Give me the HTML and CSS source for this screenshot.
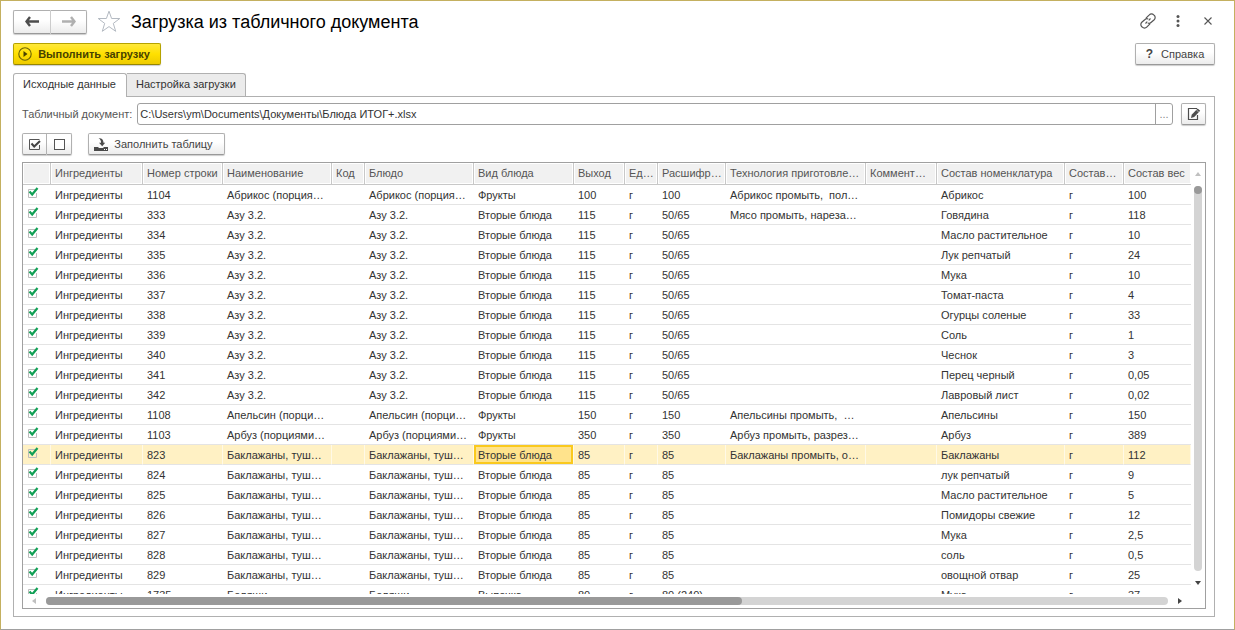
FILE: index.html
```html
<!DOCTYPE html>
<html lang="ru">
<head>
<meta charset="utf-8">
<title>Загрузка из табличного документа</title>
<link rel="stylesheet" href="styles.css">
</head>
<body>
<main class="window">
  <header class="titlebar">
    <div class="btn-group nav">
      <button class="btn nav-btn" type="button" aria-label="Назад">
        <svg width="14" height="11" viewBox="0 0 14 11"><path d="M5 1 1.500 5.500l3.500 4.500M1.500 5.500H14" fill="none" stroke="#4d4d4d" stroke-width="2.400"/></svg>
      </button>
      <button class="btn nav-btn" type="button" aria-label="Вперед">
        <svg width="14" height="11" viewBox="0 0 14 11"><path d="M9 1l3.500 4.500L9 10M12.500 5.500H0" fill="none" stroke="#b0b0b0" stroke-width="2.400"/></svg>
      </button>
    </div>
    <button class="plain star" type="button" aria-label="В избранное">
      <svg width="24" height="23" viewBox="0 0 24 23"><path d="M12 1.200l2.600 7.300h8.200l-6.500 4.900 2.400 7.900-6.700-4.700-6.700 4.700 2.400-7.900L1.200 8.500h8.200z" fill="#fff" stroke="#b4bac2" stroke-width="1"/></svg>
    </button>
    <h1 class="title">Загрузка из табличного документа</h1>
    <div class="window-tools">
      <button class="plain tool" type="button" aria-label="Ссылка">
        <svg width="16" height="16" viewBox="0 0 16 16" fill="none" stroke="#555" stroke-width="1.200"><path d="M6 5.200l3.300-3.400a3 3 0 0 1 4.400 0l.5.500a3 3 0 0 1 0 4.400L11 9.500a2.800 2.800 0 0 1-3.200.5"/><path d="M10 10.800l-3.300 3.400a3 3 0 0 1-4.400 0l-.5-.5a3 3 0 0 1 0-4.400L5 6.500A2.800 2.800 0 0 1 8.200 6"/><path d="M5.500 10.500l1.800-1.800M8.700 7.300l1.800-1.800"/></svg>
      </button>
      <button class="plain tool" type="button" aria-label="Меню">
        <svg width="4" height="12" viewBox="0 0 4 12" fill="#555"><circle cx="2" cy="1.600" r="1.500"/><circle cx="2" cy="6" r="1.500"/><circle cx="2" cy="10.400" r="1.500"/></svg>
      </button>
      <button class="plain tool" type="button" aria-label="Закрыть">
        <svg width="8" height="8" viewBox="0 0 8 8"><path d="M.5.5l7 7M7.500.5l-7 7" stroke="#555" stroke-width="1.100"/></svg>
      </button>
    </div>
  </header>

  <div class="commands">
    <button class="btn primary" type="button">
      <svg width="14" height="14" viewBox="0 0 14 14"><circle cx="7" cy="7" r="6.200" fill="none" stroke="#6b6108" stroke-width="1.100"/><path d="M5.500 4v6L9.500 7z" fill="#474100"/></svg>
      Выполнить загрузку
    </button>
    <button class="btn help" type="button"><b class="question">?</b>Справка</button>
  </div>

  <div class="tabs" role="tablist">
    <button class="tab active" type="button" role="tab" aria-selected="true">Исходные данные</button>
    <button class="tab" type="button" role="tab" aria-selected="false">Настройка загрузки</button>
  </div>

  <section class="panel">
    <div class="file-row">
      <label for="file">Табличный документ:</label>
      <div class="file-field">
        <input id="file" type="text" value="C:\Users\ym\Documents\Документы\Блюда ИТОГ+.xlsx">
        <button class="pick" type="button" aria-label="Выбрать">...</button>
      </div>
      <button class="btn edit" type="button" aria-label="Изменить">
        <svg width="14" height="14" viewBox="0 0 14 14"><path d="M10 1.500H1.500v11h9V8" fill="none" stroke="#4d4d4d" stroke-width="1.200"/><path d="M4 11l.7-3.300L10.600 1.500l2.600 2.300L7.200 10z" fill="#4d4d4d"/><path d="M9.300 2.900l2.600 2.300" stroke="#ddd" stroke-width=".7"/></svg>
      </button>
    </div>

    <div class="tool-row">
      <div class="btn-group marks">
        <button class="btn mark" type="button" aria-label="Отметить все">
          <svg width="13" height="13" viewBox="0 0 13 13" fill="none"><path d="M11.500 7v4.500H1.500V1.500h10" stroke="#555"/><path d="M3.500 5.500l2.700 3L12 3" stroke="#444" stroke-width="2"/></svg>
        </button>
        <button class="btn mark" type="button" aria-label="Снять отметки">
          <svg width="13" height="13" viewBox="0 0 13 13"><rect x="1.500" y="1.500" width="10" height="10" fill="#fff" stroke="#555"/></svg>
        </button>
      </div>
      <button class="btn fill" type="button">
        <svg width="14" height="13" viewBox="0 0 14 13" fill="#4a4a4a"><path d="M0 9h4l1 1h4l1-1h4v4H0z"/><path d="M4.500.3C8 0 9.500 1.800 9.500 4.800h1.700L8.200 8.200 5 4.800h2C7 2.800 6.500 1.300 4.500.3z"/><path d="M10 11.500h1M12 11.500h1" stroke="#fff"/></svg>
        Заполнить таблицу
      </button>
    </div>

    <div class="grid-box">
      <div class="grid-view">
        <table class="grid">
          <colgroup>
            <col class="c-mark"><col class="c-kind"><col class="c-num"><col class="c-name"><col class="c-code">
            <col class="c-name"><col class="c-type"><col class="c-out"><col class="c-code"><col class="c-split">
            <col class="c-tech"><col class="c-note"><col class="c-item"><col class="c-unit"><col>
          </colgroup>
          <thead>
            <tr><th aria-label="Отметка"></th><th>Ингредиенты</th><th>Номер строки</th><th>Наименование</th><th>Код</th><th>Блюдо</th><th>Вид блюда</th><th>Выход</th><th>Ед…</th><th>Расшифр…</th><th>Технология приготовле…</th><th>Коммент…</th><th>Состав номенклатура</th><th>Состав…</th><th>Состав вес</th></tr>
          </thead>
          <tbody id="rows"></tbody>
        </table>
      </div>
      <div class="vscroll">
        <i class="arrow up"></i>
        <div class="vtrack"><div class="vthumb"></div></div>
        <i class="arrow down"></i>
      </div>
      <div class="hscroll">
        <i class="arrow left"></i>
        <div class="htrack"><div class="hthumb"></div></div>
        <i class="arrow right"></i>
      </div>
    </div>
  </section>
</main>
<script src="rows.js"></script>
</body>
</html>
```
FILE: styles.css
```css
* { box-sizing: border-box; }

body {
  margin: 0;
  font: 11px/14px "Liberation Sans", Arial, sans-serif;
  color: #333;
  background: #fff;
}

button, input { font: inherit; color: inherit; }
button { padding: 0; }
svg { display: block; flex: none; }

.window {
  display: flex;
  flex-direction: column;
  height: 100vh;
  padding: 8px 19px 12px 12px;
  border: 1px solid #c4b060;
  border-bottom-color: #a0a0a0;
}

/* Title bar */
.titlebar { display: flex; align-items: center; height: 25px; }

.btn {
  display: flex;
  align-items: center;
  justify-content: center;
  border: 1px solid #b0b0b0;
  border-bottom-color: #999;
  border-radius: 2px;
  background: linear-gradient(#fff 40%, #ececec);
  box-shadow: 0 1px 1px #ccc;
  color: #444;
  white-space: nowrap;
}

.btn-group { display: flex; }
.btn-group .btn:first-child { border-radius: 2px 0 0 2px; }
.btn-group .btn:last-child { border-left: 0; border-radius: 0 2px 2px 0; }

.nav-btn { width: 37px; height: 24px; }
.nav-btn:first-child { border-right-color: #ccc; width: 38px; }
.nav-btn:last-child { width: 36px; }

.plain { border: 0; background: none; }
.star { margin-left: 10px; }
.title { margin: 0 0 0 10px; font-size: 18px; line-height: 24px; font-weight: 400; color: #000; white-space: nowrap; }

.window-tools { display: flex; align-items: center; margin-left: auto; padding-bottom: 2px; }
.tool { display: flex; align-items: center; justify-content: center; width: 30px; height: 24px; }
.tool:last-child { margin-right: -8px; }
.window-tools { padding-right: 0; }

/* Commands */
.commands { display: flex; justify-content: space-between; margin-top: 9px; }
.primary {
  gap: 6px;
  width: 148px;
  height: 22px;
  padding-right: 6px;
  border-color: #b5a200;
  border-bottom-color: #968600;
  background: linear-gradient(#ffe83a, #ffe000 50%, #eecb00);
  color: #474100;
  font-weight: 700;
}
.help { width: 80px; height: 22px; gap: 8px; }
.question { font-size: 12px; }

/* Tabs */
.tabs { display: flex; height: 23px; margin-top: 8px; }
.tab {
  height: 23px;
  padding: 0 9px 2px;
  border: 1px solid #b0b0b0;
  border-left: 0;
  border-bottom: 0;
  border-radius: 0 3px 0 0;
  background: #ebebeb;
  color: #333;
  white-space: nowrap;
}
.tab.active {
  z-index: 1;
  height: 24px;
  padding: 0 10px 3px 9px;
  border-left: 1px solid #b0b0b0;
  border-radius: 3px 3px 0 0;
  background: #fff;
}

.panel {
  flex: 1;
  display: flex;
  flex-direction: column;
  min-height: 0;
  padding: 6px 8px 7px;
  border: 1px solid #b0b0b0;
}

.file-row { display: flex; align-items: center; }
.file-row label { color: #555; margin-right: 5px; white-space: nowrap; }
.file-field {
  display: flex;
  flex: 1;
  height: 22px;
  border: 1px solid #a0a0a0;
  border-radius: 3px;
}
.file-field input { flex: 1; min-width: 0; padding: 0 2px; border: 0; background: none; outline: 0; }
.pick { width: 17px; border: 0; border-left: 1px solid #a0a0a0; background: none; color: #888; }
.edit { width: 25px; height: 22px; margin-left: 8px; }

.tool-row { display: flex; gap: 16px; margin-top: 8px; }
.mark { width: 25px; height: 22px; }
.fill { gap: 6px; width: 137px; height: 22px; padding-right: 6px; }

/* Data grid */
.grid-box {
  flex: 1;
  display: grid;
  grid-template-columns: minmax(0, 1fr) 14px;
  grid-template-rows: minmax(0, 1fr) 14px;
  min-height: 0;
  margin-top: 7px;
  border: 1px solid #a0a0a0;
}
.grid-view { overflow: hidden; }
.grid { width: 100%; table-layout: fixed; border-collapse: separate; border-spacing: 0; }

.c-mark { width: 28px; }
.c-kind { width: 92px; }
.c-num { width: 80px; }
.c-name { width: 109px; }
.c-code { width: 33px; }
.c-type { width: 100px; }
.c-out { width: 51px; }
.c-split { width: 68px; }
.c-tech { width: 140px; }
.c-note { width: 71px; }
.c-item { width: 128px; }
.c-unit { width: 59px; }

.grid th, .grid td { padding: 0 0 0 4px; text-align: left; white-space: pre; overflow: hidden; }
.grid th {
  height: 22px;
  padding-bottom: 1px;
  border-right: 1px solid #c8c8c8;
  border-bottom: 1px solid #c8c8c8;
  background: #f1f1f1;
  box-shadow: inset 0 0 0 1px #fff;
  font-weight: 400;
  color: #555;
}
.grid th:last-child { border-right: 0; }
.grid td { height: 20px; border-bottom: 1px solid #e4e4e4; }
.grid .current td { background: #fff1c4; border-right: 1px solid #fff9e6; }
.grid .current .cell-current { background: #ffe38c; box-shadow: inset 0 0 0 2px #fac91e; }

.row-check {
  appearance: none;
  display: block;
  width: 12px;
  height: 12px;
  margin: 0 0 3px;
  background: url("data:image/svg+xml,%3Csvg xmlns='http://www.w3.org/2000/svg' viewBox='0 0 12 12' fill='none'%3E%3Cpath d='M9.500 6v4.500h-8v-8h7' stroke='%23bcbcbc'/%3E%3Cpath d='M2.500 4.500l2.700 3L10.500 1' stroke='%2310a055' stroke-width='2.200'/%3E%3C/svg%3E") no-repeat;
}

/* Scrollbars */
.vscroll { display: flex; flex-direction: column; align-items: center; padding: 9px 0; }
.vtrack { flex: 1; width: 8px; margin: 10px 0; border-radius: 4px; background: #d4d4d4; }
.vthumb { width: 8px; height: 8px; border-radius: 4px; background: #999; }
.hscroll { display: flex; align-items: center; padding: 0 9px; }
.htrack { flex: 1; height: 8px; margin: 0 10px; border-radius: 4px; background: #d4d4d4; }
.hthumb { width: 62%; height: 8px; border-radius: 4px; background: #999; }
.arrow { border: 3px solid transparent; }
.up { border-top: 0; border-bottom: 4px solid #c0c0c0; }
.down { border-bottom: 0; border-top: 4px solid #444; }
.left { border-left: 0; border-right: 4px solid #c0c0c0; }
.right { border-right: 0; border-left: 4px solid #444; }
```
FILE: rows.js
```js
// Columns: number, name, dish kind, output, breakdown, technology, component, weight
const azu = (num, item, weight, tech = "") => [num, "Азу 3.2.", "Вторые блюда", "115", "50/65", tech, item, weight];
const eggplant = (num, item, weight, tech = "") => [num, "Баклажаны, туш…", "Вторые блюда", "85", "85", tech, item, weight];

const rows = [
  ["1104", "Абрикос (порция…", "Фрукты", "100", "100", "Абрикос промыть,  пол…", "Абрикос", "100"],
  azu("333", "Говядина", "118", "Мясо промыть, нареза…"),
  azu("334", "Масло растительное", "10"),
  azu("335", "Лук репчатый", "24"),
  azu("336", "Мука", "10"),
  azu("337", "Томат-паста", "4"),
  azu("338", "Огурцы соленые", "33"),
  azu("339", "Соль", "1"),
  azu("340", "Чеснок", "3"),
  azu("341", "Перец черный", "0,05"),
  azu("342", "Лавровый лист", "0,02"),
  ["1108", "Апельсин (порци…", "Фрукты", "150", "150", "Апельсины промыть,  …", "Апельсины", "150"],
  ["1103", "Арбуз (порциями…", "Фрукты", "350", "350", "Арбуз промыть, разрез…", "Арбуз", "389"],
  eggplant("823", "Баклажаны", "112", "Баклажаны промыть, о…"),
  eggplant("824", "лук репчатый", "9"),
  eggplant("825", "Масло растительное", "5"),
  eggplant("826", "Помидоры свежие", "12"),
  eggplant("827", "Мука", "2,5"),
  eggplant("828", "соль", "0,5"),
  eggplant("829", "овощной отвар", "25"),
  ["1735", "Беляши", "Выпечка", "80", "80 (240)", "", "Мука", "37"]
];

const body = document.getElementById("rows");
for (const [num, name, kind, out, split, tech, item, weight] of rows) {
  const tr = body.insertRow();
  const check = document.createElement("input");
  check.type = "checkbox";
  check.checked = true;
  check.className = "row-check";
  check.setAttribute("aria-label", "Строка " + num);
  tr.insertCell().append(check);
  for (const text of ["Ингредиенты", num, name, "", name, kind, out, "г", split, tech, "", item, "г", weight]) {
    tr.insertCell().textContent = text;
  }
  if (num === "823") {
    tr.className = "current";
    tr.cells[6].className = "cell-current";
  }
}
```
